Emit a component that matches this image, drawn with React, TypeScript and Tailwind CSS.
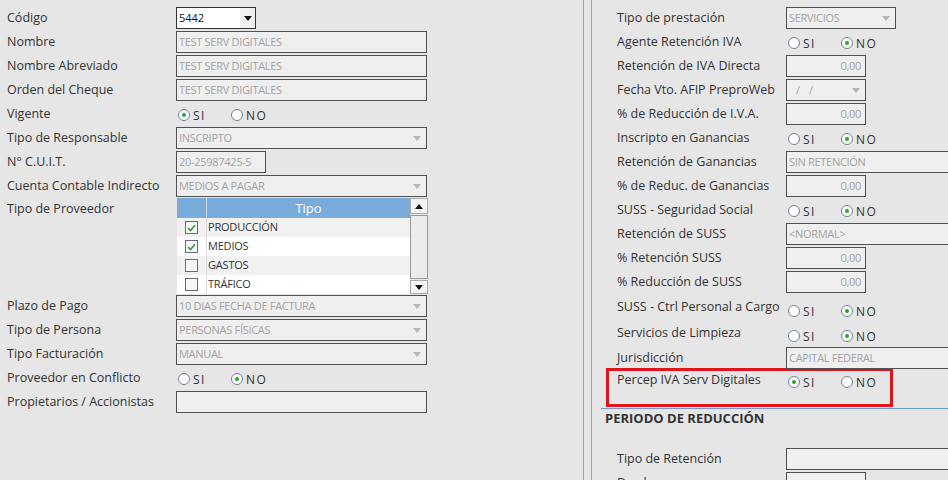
import React from "react";

const FONT = { fontFamily: '"Open Sans", "Noto Sans", sans-serif' };

function Arrow({ dark }: { dark?: boolean }) {
  return (
    <svg width="8" height="5" viewBox="0 0 8 5" className="shrink-0">
      <path d="M0 0 L8 0 L4 5 Z" fill={dark ? "#111" : "#b5b5b5"} />
    </svg>
  );
}

function Input({ w, value = "", right }: { w: string; value?: string; right?: boolean }) {
  return (
    <div
      className={`${w} h-[22px] border border-[#505050] bg-[#efefef] flex items-center px-[2px] text-[11px] text-[#a3a3a3] tracking-[-0.3px] whitespace-nowrap overflow-hidden ${right ? "justify-end pr-[4px]" : ""}`}
    >
      {value}
    </div>
  );
}

function Select({ w, value }: { w: string; value: string }) {
  return (
    <div className={`${w} h-[22px] border border-[#505050] bg-[#efefef] flex items-center justify-between pl-[2px] pr-[5px] text-[11px] text-[#a3a3a3] tracking-[-0.3px] whitespace-nowrap`}>
      <span>{value}</span>
      <Arrow />
    </div>
  );
}

function Radio({ checked, label }: { checked?: boolean; label: string }) {
  return (
    <div className="flex items-center w-[53px]">
      <div className="w-[12px] h-[12px] rounded-full border border-[#6f8298] bg-white flex items-center justify-center shrink-0">
        {checked && <div className="w-[4px] h-[4px] rounded-full bg-[#2ea52e]" />}
      </div>
      <span className="ml-[3px] text-[12px] text-[#333] tracking-[1.5px] leading-none mt-[2px]">{label}</span>
    </div>
  );
}

function YesNo({ si }: { si: boolean }) {
  return (
    <div className="flex items-center pl-[2px] pt-[2px]">
      <Radio checked={si} label="SI" />
      <Radio checked={!si} label="NO" />
    </div>
  );
}

function Row({ label, children, h = "h-[24px]", top }: { label: string; children?: React.ReactNode; h?: string; top?: boolean }) {
  return (
    <div className={`flex ${top ? "items-start" : "items-center"} ${h}`}>
      <div className={`w-[169px] shrink-0 text-[12.5px] text-[#333] whitespace-nowrap ${top ? "pt-[2px]" : ""}`}>{label}</div>
      {children}
    </div>
  );
}

function Check({ on }: { on?: boolean }) {
  return (
    <div className="w-[13px] h-[13px] border border-[#6b6b6b] bg-[#f7f7f7] flex items-center justify-center">
      {on && (
        <svg width="9" height="8" viewBox="0 0 9 8">
          <path d="M1 4 L3.5 6.5 L8 1.2" stroke="#2f9e2f" strokeWidth="1.6" fill="none" />
        </svg>
      )}
    </div>
  );
}

function TipoList() {
  const rows = [
    { t: "PRODUCCIÓN", on: true },
    { t: "MEDIOS", on: true },
    { t: "GASTOS", on: false },
    { t: "TRÁFICO", on: false },
  ];
  return (
    <div className="w-[251px] h-[96px] flex ml-[1px]">
      <div className="flex-1 flex flex-col">
        <div className="h-[20px] bg-[#7aacdb] flex">
          <div className="w-[30px] border-r border-[#c9ddef]" />
          <div className="flex-1 text-center text-[13px] text-white leading-[20px]">Tipo</div>
        </div>
        {rows.map((r, i) => (
          <div key={r.t} className={`h-[19px] flex items-center ${i % 2 === 0 ? "bg-[#f1f1f1]" : "bg-white"}`}>
            <div className="w-[30px] h-full border-r border-[#dadada] flex items-center justify-center">
              <Check on={r.on} />
            </div>
            <div className="pl-[1px] text-[11px] text-[#333] tracking-[-0.2px]">{r.t}</div>
          </div>
        ))}
      </div>
      <div className="w-[18px] flex flex-col bg-[#e9e9e9]">
        <div className="h-[16px] border border-[#aaa] bg-[#f4f4f4] flex items-center justify-center">
          <svg width="8" height="5" viewBox="0 0 8 5">
            <path d="M0 5 L8 5 L4 0 Z" fill="#111" />
          </svg>
        </div>
        <div className="flex-1 border border-[#999] bg-[#ececec] my-[1px]" />
        <div className="h-[14px] border border-[#aaa] bg-[#f4f4f4] flex items-center justify-center">
          <Arrow dark />
        </div>
      </div>
    </div>
  );
}

function LeftPanel() {
  return (
    <div className="w-[583px] shrink-0 pl-[7px] pt-[6px]">
      <Row label="Código">
        <div className="w-[80px] h-[22px] border border-[#333] bg-white flex items-center justify-between text-[11px] text-[#111] pl-[2px]">
          <span>5442</span>
          <div className="w-[15px] h-full bg-[#f0f0f0] flex items-center justify-center">
            <Arrow dark />
          </div>
        </div>
      </Row>
      <Row label="Nombre">
        <Input w="w-[251px]" value="TEST SERV DIGITALES" />
      </Row>
      <Row label="Nombre Abreviado">
        <Input w="w-[251px]" value="TEST SERV DIGITALES" />
      </Row>
      <Row label="Orden del Cheque">
        <Input w="w-[251px]" value="TEST SERV DIGITALES" />
      </Row>
      <Row label="Vigente">
        <YesNo si />
      </Row>
      <Row label="Tipo de Responsable">
        <Select w="w-[251px]" value="INSCRIPTO" />
      </Row>
      <Row label="N° C.U.I.T.">
        <Input w="w-[90px]" value="20-25987425-5" />
      </Row>
      <Row label="Cuenta Contable Indirecto">
        <Select w="w-[251px]" value="MEDIOS A PAGAR" />
      </Row>
      <Row label="Tipo de Proveedor" h="h-[96px]" top>
        <TipoList />
      </Row>
      <Row label="Plazo de Pago">
        <Select w="w-[251px]" value="10 DIAS FECHA DE FACTURA" />
      </Row>
      <Row label="Tipo de Persona">
        <Select w="w-[251px]" value="PERSONAS FÍSICAS" />
      </Row>
      <Row label="Tipo Facturación">
        <Select w="w-[251px]" value="MANUAL" />
      </Row>
      <Row label="Proveedor en Conflicto">
        <YesNo si={false} />
      </Row>
      <Row label="Propietarios / Accionistas">
        <Input w="w-[251px]" />
      </Row>
    </div>
  );
}

function RightPanel() {
  return (
    <div className="flex-1 pt-[6px] overflow-hidden">
      <div className="pl-[25px]">
        <Row label="Tipo de prestación">
          <Select w="w-[110px]" value="SERVICIOS" />
        </Row>
        <Row label="Agente Retención IVA">
          <YesNo si={false} />
        </Row>
        <Row label="Retención de IVA Directa">
          <Input w="w-[80px]" value="0,00" right />
        </Row>
        <Row label="Fecha Vto. AFIP PreproWeb">
          <div className="w-[80px] h-[22px] border border-[#505050] bg-[#efefef] flex items-center justify-between pl-[9px] pr-[5px] text-[11px] text-[#a3a3a3]">
            <span className="tracking-[3px]">/ /</span>
            <Arrow />
          </div>
        </Row>
        <Row label="% de Reducción de I.V.A.">
          <Input w="w-[80px]" value="0,00" right />
        </Row>
        <Row label="Inscripto en Ganancias">
          <YesNo si={false} />
        </Row>
        <Row label="Retención de Ganancias">
          <Input w="w-[200px] shrink-0" value="SIN RETENCIÓN" />
        </Row>
        <Row label="% de Reduc. de Ganancias">
          <Input w="w-[80px]" value="0,00" right />
        </Row>
        <Row label="SUSS - Seguridad Social">
          <YesNo si={false} />
        </Row>
        <Row label="Retención de SUSS">
          <Input w="w-[200px] shrink-0" value="<NORMAL>" />
        </Row>
        <Row label="% Retención SUSS">
          <Input w="w-[80px]" value="0,00" right />
        </Row>
        <Row label="% Reducción de SUSS">
          <Input w="w-[80px]" value="0,00" right />
        </Row>
        <Row label="SUSS - Ctrl Personal a Cargo" h="h-[27px]">
          <div className="pt-[4px]">
            <YesNo si={false} />
          </div>
        </Row>
        <Row label="Servicios de Limpieza" h="h-[25px]">
          <div className="pt-[2px]">
            <YesNo si={false} />
          </div>
        </Row>
        <Row label="Jurisdicción">
          <Input w="w-[200px] shrink-0" value="CAPITAL FEDERAL" />
        </Row>
      </div>
      <div className="ml-[14px] w-[287px] h-[39px] border-[3px] border-[#e0141c] pl-[8px] -mt-[2px]">
        <div className="flex items-start">
          <div className="w-[169px] shrink-0 text-[12.5px] text-[#333] whitespace-nowrap pt-[0px]">Percep IVA Serv Digitales</div>
          <div className="pt-[2px]">
            <YesNo si />
          </div>
        </div>
      </div>
      <div className="ml-[9px] mt-[1px] border-t border-[#6b9ccc]" />
      <div className="pl-[13px] h-[24px] text-[13px] font-bold text-[#333] leading-[18px]">PERIODO DE REDUCCIÓN</div>
      <div className="pl-[25px] pt-[14px]">
        <Row label="Tipo de Retención">
          <Input w="w-[200px] shrink-0" />
        </Row>
        <Row label="Desde">
          <Input w="w-[80px]" />
        </Row>
      </div>
    </div>
  );
}

export default function App() {
  return (
    <div className="w-[948px] h-[480px] bg-[#e6e6e6] flex overflow-hidden" style={FONT}>
      <LeftPanel />
      <div className="w-[9px] shrink-0 border-l border-r border-[#a3a3a3]" />
      <RightPanel />
    </div>
  );
}
